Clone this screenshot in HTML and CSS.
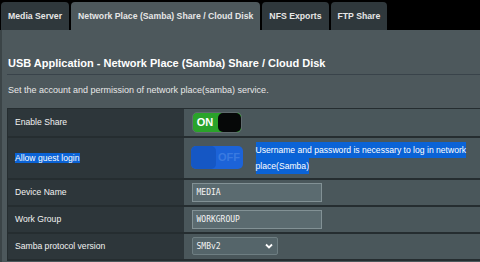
FILE: index.html
```html
<!DOCTYPE html>
<html lang="en">
<head>
    <meta charset="UTF-8">
    <meta name="viewport" content="width=device-width, initial-scale=1.0">
    <title>USB Application - Samba</title>
    <link rel="stylesheet" href="styles.css">
</head>
<body>
    <div class="tabs">
        <div class="tab">Media Server</div>
        <div class="tab active">Network Place (Samba) Share / Cloud Disk</div>
        <div class="tab">NFS Exports</div>
        <div class="tab">FTP Share</div>
    </div>
    <div class="panel">
        <h1 class="title">USB Application - Network Place (Samba) Share / Cloud Disk</h1>
        <div class="divider"></div>
        <p class="desc">Set the account and permission of network place(samba) service.</p>
        <table class="form-table">
            <tr class="row-share">
                <th>Enable Share</th>
                <td>
                    <div class="switch on"><span class="switch-label">ON</span><span class="knob"></span></div>
                </td>
            </tr>
            <tr class="row-guest">
                <th><span class="sel">Allow guest login</span></th>
                <td>
                    <div class="guest-cell">
                        <div class="switch off"><span class="knob"></span><span class="switch-label">OFF</span></div>
                        <div class="hint"><span class="sel tall">Username and password is necessary to log in network place(Samba)</span></div>
                    </div>
                </td>
            </tr>
            <tr class="row-input">
                <th>Device Name</th>
                <td><div class="text-input">MEDIA</div></td>
            </tr>
            <tr class="row-input">
                <th>Work Group</th>
                <td><div class="text-input">WORKGROUP</div></td>
            </tr>
            <tr class="row-input">
                <th>Samba protocol version</th>
                <td>
                    <div class="select">
                        <span>SMBv2</span>
                        <svg width="8" height="6" viewBox="0 0 8 6"><path d="M1 1.5 L4 4.5 L7 1.5" stroke="#ffffff" stroke-width="1.8" fill="none"/></svg>
                    </div>
                </td>
            </tr>
        </table>
    </div>
</body>
</html>
```

FILE: styles.css
```css
* { margin: 0; padding: 0; box-sizing: border-box; }
body {
    font-family: 'Liberation Sans', Arial, sans-serif;
    background: #000;
    color: #fff;
    width: 480px;
    height: 262px;
    overflow: hidden;
}
.tabs { display: flex; gap: 2px; padding: 2px 0 0 1px; height: 30px; }
.tab {
    height: 28px;
    padding: 0 7px;
    line-height: 28px;
    font-size: 8.7px;
    font-weight: bold;
    color: #e6e6e6;
    background: #2f383c;
    border-radius: 4px 4px 0 0;
    white-space: nowrap;
}
.tab.active { background: #4d585c; }
.panel {
    background: #4d585c;
    border-left: 2px solid #3b4447;
    height: 232px;
    padding: 25px 0 0 5px;
}
.title { font-size: 11px; font-weight: bold; line-height: 16px; padding-left: 1px; }
.divider { height: 1px; background: #39434a; margin-top: 3px; }
.desc { font-size: 9px; color: #e8e8e8; margin: 9px 0 0 1px; line-height: 12px; }
.form-table {
    margin-top: 12px;
    border-collapse: collapse;
    width: 100%;
    border: 1px solid #252d30;
    border-right: none;
}
.form-table th, .form-table td { border-bottom: 2px solid #252d30; vertical-align: middle; }
.form-table th {
    width: 176px;
    background: #2d363a;
    text-align: left;
    font-weight: normal;
    font-size: 8.6px;
    padding-left: 7px;
    color: #f2f2f2;
}
.form-table td { background: #4a575b; padding-left: 8px; }
.row-share { height: 28px; }
.row-guest { height: 42px; }
.row-input { height: 27px; }
.sel { background: #0b63d6; color: #fff; }
.sel.tall { padding: 3px 0; -webkit-box-decoration-break: clone; box-decoration-break: clone; }
.switch {
    display: flex;
    width: 50px;
    height: 21px;
    border-radius: 5px;
    overflow: hidden;
    font-size: 11px;
    font-weight: bold;
}
.switch.on { background: #2aa32a; border: 1px solid #5f6b6e; }
.switch.on .switch-label { width: 25px; line-height: 19px; text-align: center; color: #fff; }
.switch.on .knob { flex: 1; background: #060808; border-radius: 5px; }
.switch.off { background: #1c63d8; height: 23px; width: 52px; }
.switch.off .knob { width: 25px; background: #1557c4; border-radius: 5px; }
.switch.off .switch-label { flex: 1; line-height: 23px; text-align: center; color: #3a7ae0; }
.guest-cell { display: flex; align-items: center; gap: 13px; margin-left: -1px; }
.hint { font-size: 8.6px; line-height: 16px; width: 216px; }
.text-input {
    width: 130px;
    height: 19px;
    background: #5b6b70;
    border: 1px solid #829195;
    font-family: 'DejaVu Sans Mono', monospace;
    font-size: 8px;
    line-height: 17px;
    padding-left: 4px;
    color: #f4f4f4;
}
.select {
    display: flex;
    align-items: center;
    justify-content: space-between;
    width: 86px;
    height: 18px;
    background: #55656a;
    border: 1px solid #6e7e82;
    border-radius: 2px;
    padding: 0 4px;
    font-family: 'DejaVu Sans Mono', monospace;
    font-size: 8px;
    color: #f4f4f4;
}
```
